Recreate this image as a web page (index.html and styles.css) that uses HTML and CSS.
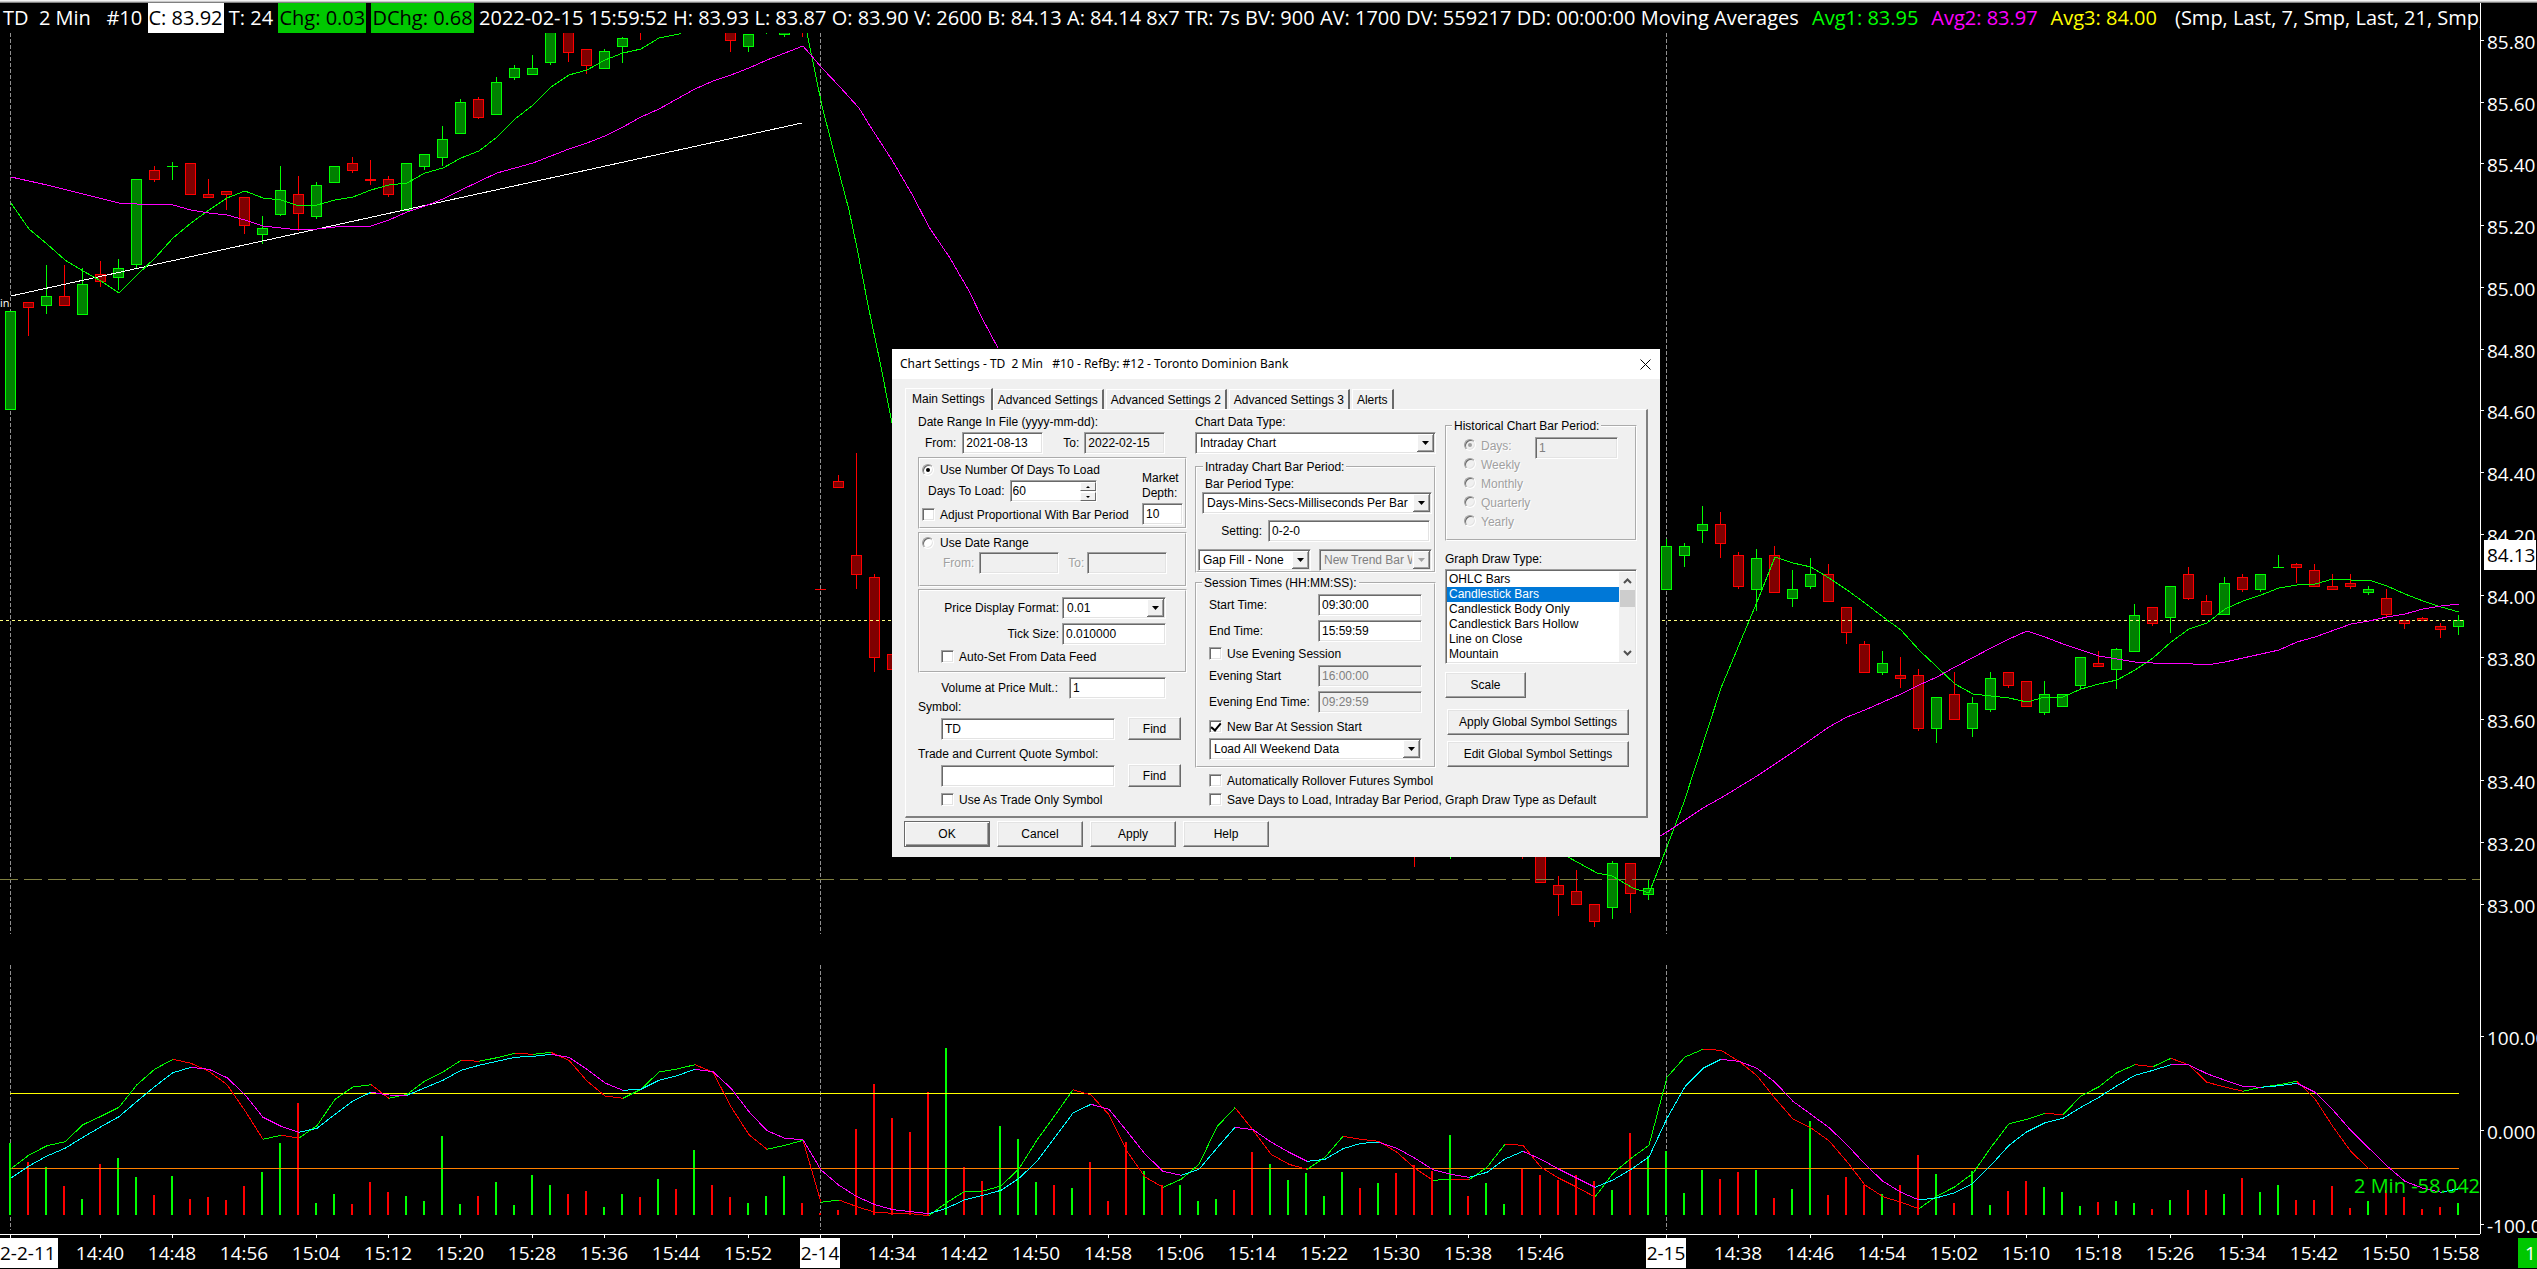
FILE: index.html
```html
<!DOCTYPE html>
<html lang="en">
<head>
<meta charset="utf-8">
<title>TD 2 Min #10</title>
<link rel="stylesheet" href="styles.css">
</head>
<body>
<main class="chart">
  <div class="window-edge"></div>

  <header class="readout">
    <div class="readout-main">
      <span>TD  2 Min   #10</span>
      <span class="tag tag-close">C: 83.92</span>
      <span>T: 24</span>
      <span class="tag tag-up">Chg: 0.03</span>
      <span class="tag tag-up">DChg: 0.68</span>
      <span>2022-02-15 15:59:52</span>
      <span>H: 83.93</span>
      <span>L: 83.87</span>
      <span>O: 83.90</span>
      <span>V: 2600</span>
      <span>B: 84.13</span>
      <span>A: 84.14</span>
      <span>8x7</span>
      <span>TR: 7s</span>
      <span>BV: 900</span>
      <span>AV: 1700</span>
      <span>DV: 559217</span>
      <span>DD: 00:00:00</span>
      <span>Moving Averages</span>
    </div>
    <div class="readout-averages">
      <span class="avg1">Avg1: 83.95</span>
      <span class="avg2">Avg2: 83.97</span>
      <span class="avg3">Avg3: 84.00</span>
    </div>
    <span class="readout-params">(Smp, Last, 7, Smp, Last, 21, Smp,</span>
  </header>

  <section class="plot" aria-label="Price, oscillator and volume">
    <svg id="plot" viewBox="0 33 2480 1201" preserveAspectRatio="none" aria-hidden="true"></svg>
    <span class="line-note">in</span>
    <span class="osc-note">2 Min -58.042</span>
  </section>

  <aside class="scale">
    <ol class="scale-prices">
      <li>85.80</li><li>85.60</li><li>85.40</li><li>85.20</li><li>85.00</li>
      <li>84.80</li><li>84.60</li><li>84.40</li><li>84.20</li><li>84.00</li>
      <li>83.80</li><li>83.60</li><li>83.40</li><li>83.20</li><li>83.00</li>
    </ol>
    <ol class="scale-osc">
      <li>100.00</li><li>0.000</li><li>-100.0</li>
    </ol>
    <span class="bid-tag">84.13</span>
  </aside>

  <ol class="time-axis" id="time-axis"></ol>
  <div class="corner"><span>1</span></div>
</main>

<div class="dialog" role="dialog" aria-labelledby="dialog-title">
  <div class="title-bar">
    <h1 id="dialog-title">Chart Settings - TD  2 Min   #10 - RefBy: #12 - Toronto Dominion Bank</h1>
    <button class="close" type="button" aria-label="Close">
      <svg width="11" height="11" viewBox="0 0 11 11"><path d="M.5.5l10 10M10.500.5l-10 10" stroke="#000" fill="none"/></svg>
    </button>
  </div>

  <form class="dialog-body">
    <div class="tabs" role="tablist">
      <button type="button" role="tab" class="tab tab-active" aria-selected="true">Main Settings</button>
      <button type="button" role="tab" class="tab">Advanced Settings</button>
      <button type="button" role="tab" class="tab">Advanced Settings 2</button>
      <button type="button" role="tab" class="tab">Advanced Settings 3</button>
      <button type="button" role="tab" class="tab">Alerts</button>
    </div>

    <div class="panel" role="tabpanel">
      <div class="column">
        <div class="caption">Date Range In File (yyyy-mm-dd):</div>
        <div class="row date-row">
          <label for="file-from">From:</label>
          <input class="field" id="file-from" type="text" value="2021-08-13">
          <label for="file-to">To:</label>
          <input class="field field-locked" id="file-to" type="text" value="2022-02-15" readonly>
        </div>

        <div class="group load-days">
          <div class="load-left">
            <label class="check"><input type="radio" name="load" checked>Use Number Of Days To Load</label>
            <div class="row days-row">
              <label for="days">Days To Load:</label>
              <div class="spin">
                <input class="field" id="days" type="text" value="60">
                <div class="spin-buttons">
                  <button type="button" aria-label="More"><i class="up"></i></button>
                  <button type="button" aria-label="Fewer"><i class="down"></i></button>
                </div>
              </div>
            </div>
            <label class="check"><input type="checkbox">Adjust Proportional With Bar Period</label>
          </div>
          <div class="load-right">
            <label for="depth">Market<br>Depth:</label>
            <input class="field" id="depth" type="text" value="10">
          </div>
        </div>

        <div class="group load-range">
          <label class="check"><input type="radio" name="load">Use Date Range</label>
          <div class="row range-row">
            <label class="off" for="range-from">From:</label>
            <input class="field" id="range-from" type="text" disabled>
            <label class="off" for="range-to">To:</label>
            <input class="field" id="range-to" type="text" disabled>
          </div>
        </div>

        <div class="group price-format">
          <div class="row right-row">
            <label for="format">Price Display Format:</label>
            <select class="field" id="format"><option>0.01</option></select>
          </div>
          <div class="row right-row">
            <label for="tick">Tick Size:</label>
            <input class="field" id="tick" type="text" value="0.010000">
          </div>
          <label class="check"><input type="checkbox">Auto-Set From Data Feed</label>
        </div>

        <div class="row volume-row">
          <label for="mult">Volume at Price Mult.:</label>
          <input class="field" id="mult" type="text" value="1">
        </div>
        <label class="caption" for="symbol">Symbol:</label>
        <div class="row symbol-row">
          <input class="field" id="symbol" type="text" value="TD">
          <button class="push" type="button">Find</button>
        </div>
        <label class="caption trade-caption" for="trade">Trade and Current Quote Symbol:</label>
        <div class="row symbol-row">
          <input class="field" id="trade" type="text">
          <button class="push" type="button">Find</button>
        </div>
        <label class="check trade-only"><input type="checkbox">Use As Trade Only Symbol</label>
      </div>

      <div class="column">
        <label class="caption" for="data-type">Chart Data Type:</label>
        <select class="field data-type" id="data-type"><option>Intraday Chart</option></select>

        <fieldset class="intraday">
          <legend>Intraday Chart Bar Period:</legend>
          <label class="caption" for="bar-type">Bar Period Type:</label>
          <select class="field" id="bar-type"><option>Days-Mins-Secs-Milliseconds Per Bar</option></select>
          <div class="row setting-row">
            <label for="setting">Setting:</label>
            <input class="field" id="setting" type="text" value="0-2-0">
          </div>
          <div class="row gap-row">
            <select class="field" aria-label="Gap fill"><option>Gap Fill - None</option></select>
            <select class="field" aria-label="New trend bar" disabled><option>New Trend Bar When</option></select>
          </div>
        </fieldset>

        <fieldset class="session">
          <legend>Session Times (HH:MM:SS):</legend>
          <div class="row time-row">
            <label for="start">Start Time:</label>
            <input class="field" id="start" type="text" value="09:30:00">
          </div>
          <div class="row time-row">
            <label for="end">End Time:</label>
            <input class="field" id="end" type="text" value="15:59:59">
          </div>
          <label class="check"><input type="checkbox">Use Evening Session</label>
          <div class="row time-row">
            <label for="evening-start">Evening Start</label>
            <input class="field" id="evening-start" type="text" value="16:00:00" disabled>
          </div>
          <div class="row time-row">
            <label for="evening-end">Evening End Time:</label>
            <input class="field" id="evening-end" type="text" value="09:29:59" disabled>
          </div>
          <label class="check new-bar"><input type="checkbox" checked>New Bar At Session Start</label>
          <select class="field" aria-label="Weekend data"><option>Load All Weekend Data</option></select>
        </fieldset>

        <label class="check rollover"><input type="checkbox">Automatically Rollover Futures Symbol</label>
        <label class="check save-default"><input type="checkbox">Save Days to Load, Intraday Bar Period, Graph Draw Type as Default</label>
      </div>

      <div class="column">
        <fieldset class="historical" disabled>
          <legend>Historical Chart Bar Period:</legend>
          <div class="periods">
            <label class="check off"><input type="radio" name="period" checked>Days:</label>
            <label class="check off"><input type="radio" name="period">Weekly</label>
            <label class="check off"><input type="radio" name="period">Monthly</label>
            <label class="check off"><input type="radio" name="period">Quarterly</label>
            <label class="check off"><input type="radio" name="period">Yearly</label>
          </div>
          <input class="field" type="text" value="1" aria-label="Number of days">
        </fieldset>

        <label class="caption draw-caption" for="draw-type">Graph Draw Type:</label>
        <div class="list field">
          <select id="draw-type" size="6">
            <option>OHLC Bars</option>
            <option selected>Candlestick Bars</option>
            <option>Candlestick Body Only</option>
            <option>Candlestick Bars Hollow</option>
            <option>Line on Close</option>
            <option>Mountain</option>
          </select>
          <div class="scrollbar">
            <svg width="9" height="6" viewBox="0 0 9 6"><path d="M1 5l3.500-3.500L8 5" stroke="#505050" stroke-width="2" fill="none"/></svg>
            <div class="thumb"></div>
            <svg width="9" height="6" viewBox="0 0 9 6"><path d="M1 1l3.500 3.500L8 1" stroke="#505050" stroke-width="2" fill="none"/></svg>
          </div>
        </div>
        <button class="push scale-button" type="button">Scale</button>
        <button class="push wide-button apply-global" type="button">Apply Global Symbol Settings</button>
        <button class="push wide-button" type="button">Edit Global Symbol Settings</button>
      </div>
    </div>

    <div class="actions">
      <button class="push push-default" type="button">OK</button>
      <button class="push" type="button">Cancel</button>
      <button class="push" type="button">Apply</button>
      <button class="push" type="button">Help</button>
    </div>
  </form>
</div>
<script src="script.js"></script>
</body>
</html>
```
FILE: styles.css
```css
* { box-sizing: border-box; }

body {
  margin: 0;
  background: #000;
  overflow: hidden;
}

ol { margin: 0; padding: 0; list-style: none; }

/* ---------- chart ---------- */

.chart {
  display: grid;
  grid-template-columns: minmax(0, 1fr) 57px;
  grid-template-rows: 3px 30px minmax(0, 1fr) 35px;
  height: 100vh;
  color: #fff;
  font: 19px/24px "Open Sans", "Noto Sans", sans-serif;
}

.window-edge {
  grid-column: 1 / 3;
  background: linear-gradient(#f0f0f0 0 1px, #c8c8c8 1px 2px, #808080 2px 3px);
}

.readout {
  grid-column: 1;
  display: flex;
  align-items: center;
  overflow: hidden;
  font-size: 20px;
  line-height: 30px;
  white-space: pre;
}
.readout-main {
  display: flex;
  justify-content: space-between;
  flex: 0 0 1799px;
  padding-left: 3px;
}
.readout-averages {
  display: flex;
  justify-content: space-between;
  flex: 0 0 345px;
  margin: 0 18px 0 13px;
}
.tag { padding: 0 1px; color: #000; }
.tag-close { background: #fff; }
.tag-up { background: #00c800; }
.avg1 { color: #0f0; }
.avg2 { color: #f0f; }
.avg3 { color: #ff0; }

.plot {
  grid-column: 1;
  grid-row: 3;
  position: relative;
  overflow: hidden;
}
.plot svg { display: block; width: 100%; height: 100%; }
.line-note {
  position: absolute;
  top: 21.5%;
  left: 0;
  font-size: 11px;
}
.osc-note {
  position: absolute;
  right: 0;
  top: 95%;
  color: #00f000;
  font-size: 20px;
}

.scale {
  grid-column: 2;
  grid-row: 2 / 4;
  position: relative;
  display: grid;
  grid-template-rows: minmax(0, 915fr) minmax(0, 316fr);
  overflow: hidden;
  border-left: 1px solid #fff;
}
.scale ol {
  display: flex;
  flex-direction: column;
  justify-content: space-between;
}
.scale-prices { padding-top: 27px; }
.scale-osc { padding-top: 108px; }
.scale-osc li:last-child { margin-bottom: -4px; }
.scale li { position: relative; padding-left: 6px; }
.scale li::before {
  content: "";
  position: absolute;
  left: 0;
  top: 10px;
  width: 3px;
  height: 1px;
  background: #fff;
}
.bid-tag {
  position: absolute;
  top: 43.6%;
  left: 3px;
  right: 1px;
  padding-left: 3px;
  background: #fff;
  color: #000;
  line-height: 30px;
}

.time-axis {
  grid-column: 1;
  display: grid;
  grid-template-columns: repeat(137, minmax(0, 18fr)) minmax(0, 13fr);
  align-items: start;
  padding-left: 1px;
  border-top: 1px solid #fff;
}
.time-axis li {
  position: relative;
  grid-row: 1;
  justify-self: center;
  margin-top: 3px;
  line-height: 30px;
  white-space: nowrap;
}
.time-axis li::before {
  content: "";
  position: absolute;
  left: 50%;
  top: -3px;
  width: 1px;
  height: 3px;
  background: #fff;
}
.time-axis .day { padding: 0 1px; background: #fff; color: #000; }
.time-axis .day:first-child { justify-self: start; margin-left: -1px; padding: 0 2px 0 0; }
.time-axis .day:first-child::before { left: 10px; }

.corner { display: flex; justify-content: flex-end; padding-top: 4px; }
.corner span {
  width: 19px;
  height: 30px;
  padding-left: 7px;
  background: #00c800;
  line-height: 30px;
}

/* ---------- dialog ---------- */

.dialog {
  position: absolute;
  left: 892px;
  top: 349px;
  width: 768px;
  background: #f0f0f0;
  color: #000;
  font: 12px/16px "Liberation Sans", Arial, sans-serif;
}
.title-bar {
  display: flex;
  align-items: center;
  justify-content: space-between;
  height: 30px;
  padding: 0 9px 0 8px;
  background: #fff;
}
.title-bar h1 {
  margin: 0;
  font: 12px/16px "Noto Sans", "Open Sans", sans-serif;
  white-space: pre;
}
.close {
  display: flex;
  padding: 0;
  border: 0;
  background: none;
}

.dialog-body { padding: 9px 12px 10px 13px; }
.dialog button, .dialog input, .dialog select { font: inherit; color: inherit; }

.tabs { display: flex; align-items: flex-end; }
.tab {
  height: 20px;
  padding: 1px 4px 0;
  margin-right: 2px;
  background: #f0f0f0;
  border: solid;
  border-width: 1px 2px 0 1px;
  border-color: #fff #696969 #fff #fff;
  white-space: nowrap;
}
.tab-active {
  position: relative;
  height: 22px;
  padding: 0 6px 2px;
  margin: 0 0 -1px;
}

.panel {
  display: grid;
  grid-template-columns: 269px 241px 192px;
  column-gap: 8px;
  padding: 4px 10px 8px 12px;
  border: solid;
  border-width: 1px 2px 2px 1px;
  border-color: #fff #808080 #808080 #fff;
}
.column { display: flex; flex-direction: column; min-width: 0; }
.column:last-child { padding-left: 1px; width: 193px; }

.caption { display: block; white-space: nowrap; }
.row { display: flex; align-items: center; }
.row label { white-space: nowrap; }

.field {
  height: 22px;
  min-width: 0;
  padding: 0 3px;
  border: solid 1px;
  border-color: #a0a0a0 #fff #fff #a0a0a0;
  border-radius: 0;
  outline: 0;
  background: #fff;
  box-shadow: inset 1px 1px #696969, inset -1px -1px #e3e3e3;
}
.field-locked, .field:disabled { background-color: #f0f0f0; }
.dialog .field:disabled { color: #808080; opacity: 1; }

select.field {
  appearance: none;
  padding: 0 19px 0 4px;
  text-overflow: clip;
  background: #fff url('data:image/svg+xml,<svg xmlns="http://www.w3.org/2000/svg" width="17" height="18"><path fill="%23696969" d="M0 0h17v18H0z"/><path fill="%23fff" d="M0 0h16v17H0z"/><path fill="%23a0a0a0" d="M1 1h15v16H1z"/><path fill="%23f0f0f0" d="M1 1h14v15H1z"/><path d="M5 7h7L8.500 11z"/></svg>') right 1px top 1px no-repeat;
}
select.field:disabled {
  background: #f0f0f0 url('data:image/svg+xml,<svg xmlns="http://www.w3.org/2000/svg" width="17" height="18"><path fill="%23696969" d="M0 0h17v18H0z"/><path fill="%23fff" d="M0 0h16v17H0z"/><path fill="%23a0a0a0" d="M1 1h15v16H1z"/><path fill="%23f0f0f0" d="M1 1h14v15H1z"/><path fill="%23a0a0a0" d="M5 7h7L8.500 11z"/></svg>') right 1px top 1px no-repeat;
}

.check { display: flex; align-items: center; gap: 5px; height: 16px; white-space: nowrap; }
.check input {
  appearance: none;
  flex: none;
  display: grid;
  place-items: center;
  width: 13px;
  height: 13px;
  margin: 0 0 1px;
  background: #fff;
  border: solid 1px;
  border-color: #a0a0a0 #fff #fff #a0a0a0;
  box-shadow: inset 1px 1px #696969, inset -1px -1px #e3e3e3;
}
.check input[type="radio"] {
  width: 12px;
  height: 12px;
  margin-right: 1px;
  border-radius: 50%;
}
.check input[type="radio"]:checked::before {
  content: "";
  width: 4px;
  height: 4px;
  border-radius: 50%;
  background: #000;
}
.check input[type="checkbox"]:checked::before {
  content: "";
  width: 4px;
  height: 8px;
  margin: -2px 0 0 1px;
  border: solid #000;
  border-width: 0 2px 2px 0;
  transform: rotate(40deg);
}
.off { color: #a0a0a0; text-shadow: 1px 1px #fff; }
.check input:disabled { background: #f0f0f0; }
.check input[type="radio"]:disabled:checked::before { background: #a0a0a0; }

.push {
  height: 23px;
  padding: 0;
  background: #f0f0f0;
  border: solid 1px;
  border-color: #fff #696969 #696969 #fff;
  box-shadow: inset -1px -1px #a0a0a0, inset 1px 1px #e3e3e3;
}

.group, fieldset { margin: 0; min-width: 0; border: 2px groove #fff; }
legend { margin-left: 5px; padding: 0 2px; height: 16px; white-space: nowrap; }

/* first column */
.date-row { margin: 2px 0 3px; padding-left: 7px; }
.date-row .field { width: 81px; margin: 0 20px 0 6px; }
.date-row .field:last-child { margin-left: 5px; }

.load-days { display: grid; grid-template-columns: 1fr 41px; height: 72px; padding: 3px 2px; margin-bottom: 3px; }
.days-row { margin: 2px 0 5px; padding-left: 6px; }
.spin { position: relative; display: flex; width: 87px; margin-left: 5px; }
.spin .field { width: 100%; padding-left: 2px; }
.spin-buttons { position: absolute; top: 2px; right: 1px; display: grid; gap: 1px; width: 16px; }
.spin-buttons button {
  display: grid;
  place-items: center;
  height: 9px;
  padding: 0;
  background: #f0f0f0;
  border: solid 1px;
  border-color: #fff #696969 #696969 #fff;
}
.up, .down { border: solid transparent; border-width: 0 2px; }
.up { border-bottom: 2px solid #000; }
.down { border-top: 2px solid #000; }
.load-right { display: flex; flex-direction: column; gap: 2px; padding-top: 9px; line-height: 15px; }

.load-range { height: 55px; padding: 1px 2px; margin-bottom: 2px; }
.range-row { padding-left: 21px; margin-top: 1px; }
.range-row .field { width: 80px; margin: 0 9px 0 5px; }
.range-row .field:last-child { margin: 0 0 0 3px; }

.price-format { display: flex; flex-direction: column; gap: 4px; height: 84px; padding: 6px 19px 0 21px; }
.right-row { justify-content: flex-end; }
.right-row .field { width: 104px; margin-left: 3px; }

.volume-row { margin-top: 4px; padding-right: 21px; justify-content: flex-end; }
.volume-row .field { width: 97px; margin-left: 11px; }
.symbol-row { margin-top: 2px; padding-left: 23px; }
.symbol-row .field { width: 174px; }
.symbol-row .push { width: 53px; margin-left: 13px; }
.trade-caption { margin-top: 6px; }
.trade-only { margin: 5px 0 0 23px; }

/* second column */
.data-type { margin-top: 2px; }
.intraday { height: 114px; margin-top: 5px; padding: 1px 2px 0 1px; }
.intraday .caption { padding-left: 7px; }
#bar-type { display: block; width: 230px; margin-left: 4px; }
.setting-row { margin: 6px 0 7px; justify-content: flex-end; }
.setting-row .field { width: 162px; margin: 0 2px 0 6px; }
.gap-row { gap: 8px; }
.gap-row .field { width: 113px; }

.session { display: flex; flex-direction: column; height: 193px; margin-top: 2px; padding: 3px 12px 0; }
.session legend { margin-left: -7px; }
.time-row { justify-content: space-between; margin-bottom: 4px; }
.time-row .field { width: 104px; }
.session .check { margin-bottom: 3px; }
.new-bar { margin-top: 2px; }
.rollover { margin: 5px 0 3px 14px; }
.save-default { margin-left: 14px; }

/* third column */
.historical { display: flex; gap: 12px; height: 123px; margin-top: 4px; padding: 2px 17px 0; }
.historical legend { margin-left: -12px; }
.periods { flex: 1; min-width: 0; }
.periods .check { height: 19px; gap: 4px; }
.historical .field { flex: none; width: 83px; margin-top: 1px; }
.draw-caption { margin-top: 10px; }
.list { display: flex; height: 95px; margin-top: 2px; padding: 2px 1px 1px; }
.list select {
  flex: 1;
  height: 90px;
  padding: 0;
  border: 0;
  outline: 0;
  overflow: hidden;
  background: #fff;
  scrollbar-width: none;
}
.list option { min-height: 15px; padding: 0 2px; line-height: 15px; }
.list option:checked { background: #0078d7 linear-gradient(#0078d7, #0078d7); color: #fff; }
.scrollbar {
  display: flex;
  flex-direction: column;
  align-items: center;
  width: 16px;
  padding: 6px 0;
  background: #f0f0f0;
}
.thumb { width: 15px; height: 17px; margin: 6px 0 auto; background: #cdcdcd; }
.scale-button { width: 81px; height: 26px; margin-top: 8px; }
.wide-button { width: 182px; height: 26px; margin: 6px 0 0 2px; }
.apply-global { margin-top: 11px; }

.actions { display: flex; gap: 7px; margin: 3px 0 0 -1px; }
.actions .push { width: 86px; height: 26px; }
.actions .push-default {
  border-color: #696969;
  box-shadow: inset 1px 1px #fff, inset -1px -1px #696969, inset -2px -2px #a0a0a0;
}
```
FILE: script.js
```js
const STEP = 18;
const FIRST = 10;
const x = i => FIRST + i * STEP;
const parts = [];

const line = (x1, y1, x2, y2, stroke, dash = '') =>
  parts.push(`<path d="M${x1} ${y1}L${x2} ${y2}" stroke="${stroke}" stroke-dasharray="${dash}" shape-rendering="crispEdges"/>`);
const rect = (rx, ry, w, h, fill) =>
  parts.push(`<rect x="${rx}" y="${ry}" width="${w}" height="${h}" fill="${fill}" shape-rendering="crispEdges"/>`);
const poly = (points, stroke) =>
  parts.push(`<polyline points="${points.join(' ')}" fill="none" stroke="${stroke}" shape-rendering="crispEdges"/>`);

/* session breaks */
for (const i of [0, 45, 92]) {
  line(x(i) + 0.5, 33, x(i) + 0.5, 934, '#909090', '4 2');
  line(x(i) + 0.5, 965, x(i) + 0.5, 1230, '#909090', '4 2');
}

/* Candles: direction, high, body top, body bottom, low; thirds of a pixel below base. */
const candles = [
  { start: 0, base: 0, bars: `G 934 934 1231 1231,R 906 906 923 1008,G 795 889 917 942,R 795 889 917 917,
G 804 853 944 944,R 783 823 845 861,G 777 805 833 870,G 538 538 794 803,R 498 511 539 545,G 486 499 500 540,
R 490 490 584 584,R 538 583 593 593,R 574 574 584 629,R 592 592 677 702,G 648 685 704 731,G 498 571 644 647,
R 528 583 641 692,G 546 556 650 657,G 499 499 548 548,R 471 490 512 518,R 480 538 543 555,R 528 538 584 591,
G 490 490 632 632,G 463 463 500 509,G 378 418 473 498,G 297 307 401 401,R 291 298 353 357,G 231 247 344 344,
G 195 205 233 240,G 165 205 224 224,G 80 80 188 194,R 80 80 158 185,R 148 148 197 221,G 147 154 206 206,
G 110 115 140 188,R 80 80 90 119` },
  { start: 40, base: 0, bars: `R 80 80 122 155,G 103 103 140 155,G 80 80 90 101,G 80 80 104 110,R 80 80 90 110` },
  { start: 45, base: 440, bars: `R 447 447 449 449,R 105 123 144 144,R 39 345 405 447,R 402 411 654 696,R 642 642 690 690` },
  { start: 78, base: 600, bars: `R 740 740 750 801` },
  { start: 80, base: 600, bars: `G 740 740 750 777` },
  { start: 84, base: 600, bars: `R 740 740 750 777,R 740 740 849 849,R 828 856 885 947,R 810 874 915 915,
R 912 912 966 980,G 783 790 923 957,R 790 790 882 938,G 838 865 885 899` },
  { start: 92, base: 480, bars: `G 178 199 329 329,G 189 199 228 261,G 78 133 152 188,R 96 133 191 234,R 216 226 320 326,
G 207 235 329 393,R 198 226 338 338,G 270 328 356 381,G 234 283 320 326,R 252 283 365 365,R 382 382 458 491,
R 484 493 578 578,G 513 550 578 584,R 531 586 596 624,R 567 586 746 752,G 652 652 746 788,R 576 643 719 719,
G 652 670 746 770,G 576 595 689 695,R 577 577 617 624,R 604 604 680 680,G 603 643 698 704,G 643 643 680 680,
G 532 532 617 626,R 513 550 560 560,G 504 508 569 626,G 372 406 515 515,R 382 382 431 437,G 319 319 413 459,
R 261 283 356 360,R 345 364 404 404,G 291 310 404 404,R 283 292 329 335,G 283 283 329 335,G 226 261 263 263,
R 250 253 263 308,R 252 271 320 320,R 283 319 329 329,R 283 310 322 326,G 319 328 338 344,R 328 355 404 411,
R 420 420 431 446,R 411 415 423 423,R 430 438 449 474,G 405 420 440 465` }
];
for (const run of candles) {
  run.bars.split(',').forEach((bar, k) => {
    const [dir, ...v] = bar.trim().split(' ');
    const [high, top, bottom, low] = v.map(n => run.base + Math.round(n / 3));
    const [edge, fill] = dir === 'G' ? ['#0f0', '#008000'] : ['#f00', '#800000'];
    const cx = x(run.start + k);
    const height = Math.max(1, bottom - top);
    rect(cx, high, 1, low - high, edge);
    rect(cx - 5, top, 11, height, edge);
    if (height > 2) rect(cx - 4, top + 1, 9, height - 2, fill);
  });
}

/* levels */
line(0, 620.5, 2464, 620.5, '#ffff80', '3 3');
line(0, 879.5, 2480, 879.5, '#808040', '18 6');

/* trend line and moving averages */
poly(['11,296', '802,123'], '#fff');
poly(`11,203 29,229 47,244 65,260 83,271 101,281 119,293 137,275 155,258 173,238 191,223 209,210 227,198 245,191
263,198 281,200 299,206 317,205 335,200 353,197 371,190 389,185 407,183 425,173 443,168 461,158 479,151 497,137
515,119 533,105 551,87 569,75 587,70 605,60 623,53 641,49 659,38 679,34 700,24`.split(/\s+/), '#0f0');
poly('804,22 807,33 822,106 840,176 849,210 857,248 868,305 880,362 892,423'.split(' '), '#0f0');
poly(`1568,857 1597,873 1612,876 1633,888 1649,893 1657,873 1684,802 1721,688 1757,602 1775,557 1793,563 1811,567
1829,578 1847,590 1865,603 1883,617 1901,630 1919,650 1937,667 1955,684 1973,694 1991,696 2009,698 2027,702
2045,697 2063,697 2081,689 2099,684 2117,680 2135,670 2153,658 2171,642 2189,629 2207,623 2225,609 2243,601
2261,595 2279,588 2297,585 2315,584 2333,579 2351,580 2369,580 2387,586 2405,594 2423,601 2441,607 2459,612`.split(/\s+/), '#0f0');
poly(`11,177 47,185 83,194 119,203 137,204 160,204 173,205 191,210 209,213 227,215 245,220 263,226 281,228 299,230
317,229 335,227 353,226 371,226 389,220 407,212 425,206 443,199 461,190 497,173 533,163 569,149 587,143 605,136
623,127 641,117 659,109 677,99 695,89 713,81 731,75 749,68 767,60 785,53 803,46 822,68 840,87 849,97 859,108
870,126 892,160 913,196 929,227 950,258 969,291 983,320 998,348`.split(/\s+/), '#f0f');
poly(`1660,836 1667,832 1703,808 1721,798 1757,776 1775,764 1793,752 1829,727 1847,717 1865,710 1901,694 1919,685
1937,677 1955,667 1991,648 2009,639 2027,631 2045,637 2063,644 2099,656 2117,659 2135,662 2153,663 2178,663
2207,665 2225,662 2243,658 2261,654 2279,650 2297,642 2315,637 2351,624 2369,621 2387,617 2405,614 2423,609
2441,606 2459,604`.split(/\s+/), '#f0f');

/* Volume: direction and bar top; thirds of a pixel below the oscillator pane. */
const PANE = 960;
const volume = `G549 R606 G621 R678 G717 R612 G594 G651 R705 G648 R717 R711 R720 R678 G636 G549 R429 G729 G702 R732
R666 R696 G708 G723 G528 G732 R708 G666 G735 G645 G675 R702 R693 G741 G702 R711 G657 R687 G570 R675 R711 G729 G708
G648 R729 R759 R750 R507 R372 R474 R516 R396 G264 R621 R663 G498 G537 G666 R675 G684 R606 R723 R546 G633 R675 G675
G723 G717 R690 R576 G612 G660 G639 G708 G636 R684 G669 R639 R615 R633 G525 R708 G669 G732 R627 R645 R660 R645 R663
G690 R519 G588 G573 G699 G630 R657 R636 G630 R714 G687 G483 R705 R651 R675 G702 R675 R585 G642 R729 G633 G735 R693
R663 G681 G696 G738 R726 G723 G729 R747 G720 R690 R690 G702 R654 G696 G675 R720 R720 R678 R744 G723 R690 R711 R747
R741 G729`.split(/\s+/);
volume.forEach((v, i) => {
  const top = PANE + Math.round(v.slice(1) / 3);
  rect(x(i) - 1, top, 2, 1215 - top, v[0] === 'G' ? '#0f0' : '#f00');
});

rect(10, 1093, 2449, 1, '#ff0');
rect(10, 1168, 2449, 1, '#ff8000');

/* Oscillator and its signal: each segment is coloured by its direction. */
const fast = [626,585,557,545,494,469,442,374,327,298,310,334,374,452,538,526,534,497,418,381,374,415,403,363,336,301,
304,293,280,283,277,301,363,408,415,388,336,327,314,337,440,524,568,556,541,727,720,740,757,760,761,767,727,694,693,
678,626,540,466,389,405,464,574,651,682,658,613,500,443,510,583,613,628,592,529,538,544,577,625,661,658,659,622,553,
556,622,655,682,711,640,595,556,352,291,268,271,304,347,415,477,504,542,605,675,710,727,746,708,680,640,562,491,
478,460,464,408,380,338,314,320,295,315,367,381,394,382,374,364,417,500,575,626];
const slow = [654,618,588,565,532,500,470,424,379,338,322,328,353,404,472,499,517,505,463,423,397,405,406,383,361,331,
316,304,292,289,283,292,328,369,391,388,361,347,328,335,385,455,512,535,539,630,676,710,734,749,755,761,744,719,706,
691,655,604,532,459,433,448,514,582,634,646,628,564,502,509,546,577,604,598,566,550,547,565,595,629,643,652,637,597,
574,598,628,655,682,660,628,591,475,380,325,298,304,325,367,424,463,503,554,613,664,697,720,713,698,670,616,556,515,
488,475,442,412,377,346,331,314,315,341,361,379,382,377,370,397,450,512,565,618,664,685,697,686];
const osc = (values, up, down) => {
  for (let i = 1; i < values.length; i++) {
    const a = PANE + values[i - 1] / 3;
    const b = PANE + values[i] / 3;
    line(x(i - 1) + 1, a.toFixed(1), x(i) + 1, b.toFixed(1), b < a ? up : down);
  }
};
osc(fast, '#0f0', '#f00');
osc(slow, '#0ff', '#f0f');

document.getElementById('plot').innerHTML = parts.join('');

/* time axis: one grid column per bar, a label every four bars */
const axis = document.getElementById('time-axis');
const label = (i, text, day) => {
  const li = document.createElement('li');
  li.textContent = text;
  if (day) li.className = 'day';
  li.style.gridColumn = `${Math.max(1, i)} / span 3`;
  axis.append(li);
};
const run = (from, to, start) => {
  for (let i = from, t = start; i <= to; i += 4, t += 8) {
    label(i, `${Math.floor(t / 60)}:${String(t % 60).padStart(2, '0')}`);
  }
};
label(0, '2-2-11', true);
run(5, 41, 14 * 60 + 40);
label(45, '2-14', true);
run(49, 85, 14 * 60 + 34);
label(92, '2-15', true);
run(96, 136, 14 * 60 + 38);
```
